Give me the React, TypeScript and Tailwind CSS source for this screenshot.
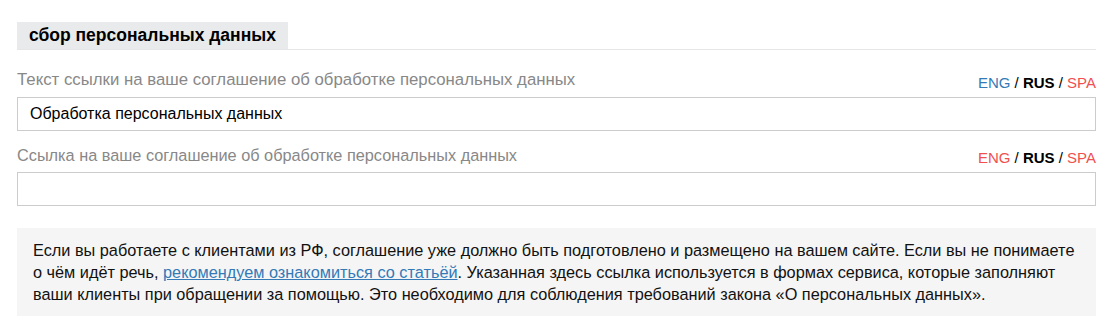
import React from "react";

interface LangProps {
  engActive?: boolean;
}

const LangSwitch = ({ engActive = true }: LangProps) => (
  <div className="mb-[4px] text-[15px] leading-[20px] whitespace-nowrap">
    <a className={engActive ? "text-[#337ab7]" : "text-[#f05050]"}>ENG</a>
    <span className="text-black"> / </span>
    <b className="text-black">RUS</b>
    <span className="text-black"> / </span>
    <a className="text-[#f05050]">SPA</a>
  </div>
);

const Field = ({
  label,
  labelClass,
  value,
  engActive,
  top,
}: {
  label: string;
  labelClass: string;
  value: string;
  engActive?: boolean;
  top: string;
}) => (
  <div className={top}>
    <div className="flex items-end justify-between">
      <label className={"mb-[7px] leading-[20px] text-[#888] " + labelClass}>{label}</label>
      <LangSwitch engActive={engActive} />
    </div>
    <input
      defaultValue={value}
      className="block h-[34px] w-full border border-[#ccc] bg-white px-[12px] text-[16px] text-black outline-none"
    />
  </div>
);

export default function App() {
  return (
    <div
      className="min-h-[332px] bg-white px-[17px] pt-[22px]"
      style={{ fontFamily: '"Liberation Sans", Arial, sans-serif' }}
    >
      <div className="w-[1079px]">
        <div className="flex border-b border-[#e6e6e6]">
          <div className="h-[27px] bg-[#e9eaeb] px-[12px] text-[17.5px] font-bold leading-[27px] text-black">
            сбор персональных данных
          </div>
        </div>

        <Field
          top="mt-[20px]"
          labelClass="text-[16.8px]"
          label="Текст ссылки на ваше соглашение об обработке персональных данных"
          value="Обработка персональных данных"
          engActive
        />
        <Field
          top="mt-[14px]"
          labelClass="text-[16.3px]"
          label="Ссылка на ваше соглашение об обработке персональных данных"
          value=""
          engActive={false}
        />

        <div className="mt-[22px] bg-[#f5f5f5] py-[11px] pl-[16px] pr-[8px] text-[16.3px] leading-[22px] text-[#111]">
          Если вы работаете с клиентами из РФ, соглашение уже должно быть подготовлено и размещено на вашем сайте. Если вы не понимаете
          <br />
          о чём идёт речь, <a className="text-[#337ab7] underline">рекомендуем ознакомиться со статьёй</a>. Указанная здесь ссылка
          используется в формах сервиса, которые заполняют
          <br />
          ваши клиенты при обращении за помощью. Это необходимо для соблюдения требований закона «О персональных данных».
        </div>
      </div>
    </div>
  );
}
